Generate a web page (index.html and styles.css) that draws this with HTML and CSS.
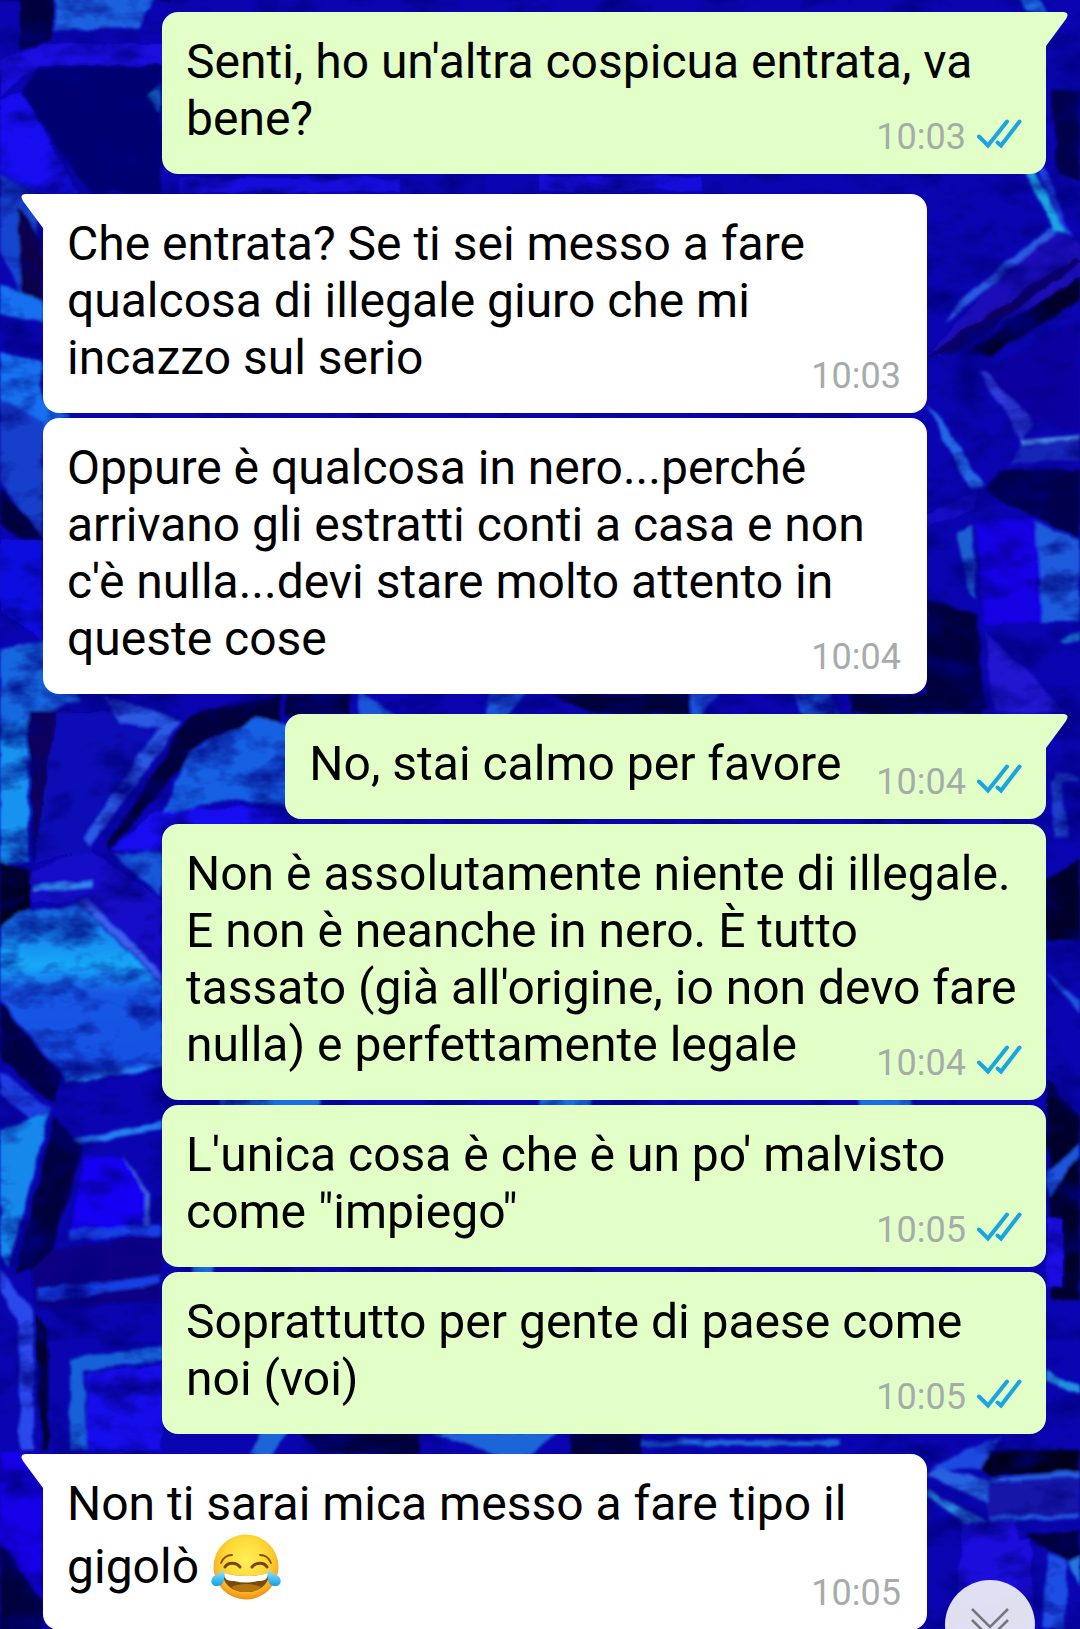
FILE: index.html
```html
<!DOCTYPE html>
<html lang="it">
<head>
    <meta charset="UTF-8">
    <meta name="viewport" content="width=device-width, initial-scale=1.0">
    <title>Chat</title>
    <link rel="stylesheet" href="styles.css">
</head>
<body>
    <!-- Wallpaper: blue crystals -->
    <svg class="wallpaper" viewBox="0 0 1080 1629" preserveAspectRatio="xMidYMid slice" aria-hidden="true">
        <defs>
            <filter id="rough" x="0" y="0" width="100%" height="100%">
                <feTurbulence type="fractalNoise" baseFrequency="0.04" numOctaves="2" seed="4" result="noise"/>
                <feDisplacementMap in="SourceGraphic" in2="noise" scale="8" xChannelSelector="R" yChannelSelector="G"/>
                <feGaussianBlur stdDeviation="1.5"/>
            </filter>
            <filter id="grain" x="0" y="0" width="100%" height="100%">
                <feTurbulence type="fractalNoise" baseFrequency="0.02 0.035" numOctaves="4" seed="9"/>
                <feColorMatrix values="0 0 0 0 0  0 0 0 0 0  0 0 0 0 0.2  2.2 0 0 0 -1"/>
            </filter>
            <linearGradient id="ice" x1="0" y1="0" x2="0" y2="1">
                <stop offset="0" stop-color="#1268e4"/>
                <stop offset="0.35" stop-color="#12a8f8"/>
                <stop offset="0.5" stop-color="#1258e4"/>
                <stop offset="1" stop-color="#1650e4"/>
            </linearGradient>
        </defs>
        <rect width="1080" height="1629" fill="#0a05b0"/>
        <g filter="url(#rough)">
            <!-- left edge, top -->
            <path fill="#04023c" d="M20 0H52V40L20 50ZM0 0H170V-20H0Z"/>
            <path fill="#1a62e0" d="M54 -10H160L138 28L54 30Z"/>
            <path fill="#1a0fe0" d="M0 62L40 44H170V66L38 64L0 96Z"/>
            <path fill="#060370" d="M38 66H162V194H90L22 96Z"/>
            <path fill="#1488d8" d="M148 95L162 86V112Z"/>
            <path fill="#1410f0" d="M0 100L22 92L78 194H44L0 172Z"/>
            <path fill="#1745d0" d="M0 174L34 190L43 300L30 310L0 250Z"/>
            <path fill="#07044c" d="M16 206L43 240V320L22 290Z"/>
            <path fill="#1470f0" d="M0 284L43 300V324L0 314ZM0 352L43 360V400L70 416L30 436L0 400Z"/>
            <path fill="#1740cc" d="M0 400L43 420V540L0 480Z"/>
            <path fill="#05023e" d="M0 486L43 536V554L0 524Z"/>
            <path fill="#1009e0" d="M0 540H43V640L0 610Z"/>
            <path fill="#1868e0" d="M0 650L43 640L80 700L34 716L0 730Z"/>
            <path fill="#1593f0" d="M0 728L28 718V862H0Z"/>
            <path fill="#07035c" d="M28 710H76L34 862Z"/>
            <path fill="#0c0cb8" d="M56 712H175L92 850L34 862Z"/>
            <path fill="#2a5ae4" d="M104 694L182 722L90 846L84 838L160 728L120 722Z"/>
            <path fill="#04013a" d="M190 716L280 694V722L200 744L110 852L106 846Z"/>
            <path fill="#1860e4" d="M190 752L256 718L290 724V806L220 800L160 820Z"/>
            <path fill="#1508f0" d="M155 812L290 806V826H162V850H110Z"/>
            <path fill="#1259da" d="M114 854L162 852V895Z"/>
            <path fill="#02011c" d="M0 860L34 872L30 906L0 940Z"/>
            <path fill="#1410c8" d="M30 872L90 850L162 900V985L80 902H32Z"/>
            <path fill="#3088f0" d="M34 886L94 880V886L34 892Z"/>
            <path fill="url(#ice)" d="M18 910L80 905L162 985V1068L66 1078L0 1000V930Z"/>
            <path fill="#3a60ec" d="M86 898L162 974V982L78 902Z"/>
            <path fill="#050346" d="M0 1002L62 1076L54 1104L0 1060Z"/>
            <path fill="#1e3de0" d="M0 1072L52 1110L30 1118L0 1094Z"/>
            <path fill="#2380f0" d="M64 1076L162 1064V1068L66 1084ZM70 1138L162 1122V1130L74 1144Z"/>
            <path fill="#1488ec" d="M0 1130L50 1112L8 1266L0 1250Z"/>
            <path fill="#06023c" d="M54 1116L82 1146L50 1262L16 1274Z"/>
            <path fill="#1205f4" d="M84 1158L126 1158L146 1196V1228L70 1236Z"/>
            <path fill="#3e60d8" d="M124 1154L150 1196V1226H144V1194Z"/>
            <path fill="#080484" d="M52 1250L162 1234V1300L38 1310L30 1270Z"/>
            <path fill="#1940e4" d="M38 1288L162 1276V1284L38 1302ZM70 1230L162 1224V1234L70 1240Z"/>
            <path fill="#2a48ec" d="M0 1268L34 1312V1450H20L18 1320L0 1290Z"/>
            <path fill="#05022e" d="M36 1314L48 1330V1450H42Z"/>
            <path fill="#1560d8" d="M70 1358L162 1346V1360L84 1370L88 1450H70Z"/>
            <path fill="#170eec" d="M88 1374L162 1364V1450H88Z"/>
            <path fill="#1605e8" d="M0 1452L22 1454L43 1490V1600L0 1540Z"/>
            <path fill="#05023c" d="M0 1544L43 1600V1640H0Z"/>
            <!-- strips between messages -->
            <path fill="#1a55d8" d="M360 690L400 720H360ZM490 690H530L505 716H488ZM790 690H830L840 718H805ZM690 690H720L700 716H692Z"/>
            <path fill="#05023a" d="M285 694H350V714H285ZM550 694H690V714H590ZM850 694H980V714H850Z"/>
            <path fill="#1d70dc" d="M220 1098H320V1107H220ZM540 1098H590V1107H540ZM860 1098H910V1107H860ZM190 1264H214V1274H190Z"/>
            <path fill="#1e65d8" d="M260 1432H290L270 1456H250ZM430 1432H560L530 1456H500ZM640 1440H840V1446H640Z"/>
            <path fill="#04023a" d="M300 1432H420V1454H320ZM570 1432H640V1456H570Z"/>
            <path fill="#1408dc" d="M180 178H400V192H180ZM540 176H700V190H540Z"/>
            <!-- right edge -->
            <path fill="#1d70e8" d="M1018 -6H1036L1048 14H1026Z"/>
            <path fill="#1ca4e4" d="M1024 170L1036 172L1066 232L1054 230Z"/>
            <path fill="#1d3fe0" d="M1038 168H1046L1072 238L1066 234Z"/>
            <path fill="#06034c" d="M1050 90H1080V180L1058 176Z"/>
            <path fill="#1a0fb8" d="M1050 228L1080 246V280L944 356H926Z"/>
            <path fill="#2a5ae0" d="M1050 228L1056 232L944 324L960 298Z"/>
            <path fill="#080260" d="M926 356L1076 256L1080 262L960 352Z"/>
            <path fill="#05022c" d="M966 352L1080 276V300L990 356Z"/>
            <path fill="#3340e0" d="M978 372H988L1034 424L1022 440Z"/>
            <path fill="#0a05a0" d="M984 372L1080 320V430L1034 420Z"/>
            <path fill="#4a8ae0" d="M1020 440L1080 435V439L1022 445Z"/>
            <path fill="#1828b8" d="M1020 446L1080 440V460L1010 464Z"/>
            <path fill="#2468e4" d="M926 404L950 430L984 488H970Z"/>
            <path fill="#06024c" d="M984 492L1000 470H1080V538L1020 510Z"/>
            <path fill="#1208c8" d="M926 514L976 490V510L926 528Z"/>
            <path fill="#1c60d0" d="M955 534L972 524L976 600L966 584Z"/>
            <path fill="#1206e4" d="M976 520L1036 518L1042 622L984 624Z"/>
            <path fill="#1e5cdc" d="M1036 522L1080 540V622L1042 622Z"/>
            <path fill="#04023c" d="M926 600L976 612L986 710H926Z"/>
            <path fill="#1c84dc" d="M1060 642L1080 630V638L1066 646Z"/>
            <path fill="#2412d0" d="M986 632L1040 684L1064 712H994Z"/>
            <path fill="#1a40c8" d="M1052 780L1062 776L1068 836L1054 840ZM1054 772L1080 776V780L1056 784Z"/>
            <path fill="#05022c" d="M1046 880L1080 860V940H1046ZM1046 1080L1080 1120V1300H1052Z"/>
            <path fill="#1d55dc" d="M1046 972L1080 1000V1014L1060 990ZM1046 1172L1080 1144V1152L1050 1196Z"/>
            <path fill="#1a0ee4" d="M1048 1220H1062V1286H1046Z"/>
            <path fill="#2090e0" d="M1046 1370L1080 1388V1396L1046 1380Z"/>
            <path fill="#1c48e0" d="M1004 1438L980 1468L930 1470L966 1450Z"/>
            <path fill="#03011c" d="M990 1450H1080V1472L990 1476L980 1466Z"/>
            <path fill="#2862e0" d="M940 1468L990 1480V1504L926 1476ZM990 1478L1080 1472V1477L990 1482Z"/>
            <path fill="#298be0" d="M926 1490L976 1516L984 1522H964L926 1496Z"/>
            <path fill="#1418a8" d="M992 1484L1080 1478V1516L988 1520Z"/>
            <path fill="#235ae0" d="M988 1518L1080 1514V1518L988 1522Z"/>
            <path fill="#1a10dc" d="M962 1522H1016L1036 1629H956ZM1018 1540H1030L1034 1629H1020Z"/>
            <path fill="#1a4ee4" d="M1048 1554L1066 1560V1629H1042Z"/>
            <path fill="#05033c" d="M1024 1536L1080 1530V1556L1066 1560Z"/>
            <path fill="#2478d8" d="M1068 1562L1080 1554V1588Z"/>
        </g>
        <rect width="1080" height="1629" filter="url(#grain)"/>
    </svg>

    <svg class="sprite" aria-hidden="true">
        <symbol id="ticks" viewBox="0 0 46 38">
            <path fill="none" stroke="#1ba5e0" stroke-width="4" stroke-linecap="round" stroke-linejoin="miter" d="M3 18.500L12 27.500L31 3.500M21.500 24.500L25 27.500L43.500 3.500"/>
        </symbol>
    </svg>

    <main class="chat">
        <div class="message out tail">
            <p>Senti, ho un'altra cospicua entrata, va bene?
                <span class="meta"><time>10:03</time><svg class="ticks" role="img" aria-label="Letto"><use href="#ticks"/></svg></span>
            </p>
        </div>

        <div class="message in tail">
            <p>Che entrata? Se ti sei messo a fare qualcosa di illegale giuro che mi incazzo sul serio
                <span class="meta"><time>10:03</time></span>
            </p>
        </div>
        <div class="message in">
            <p>Oppure è qualcosa in nero...perché arrivano gli estratti conti a casa e non c'è nulla...devi stare molto attento in queste cose
                <span class="meta"><time>10:04</time></span>
            </p>
        </div>

        <div class="message out tail">
            <p>No, stai calmo per favore
                <span class="meta"><time>10:04</time><svg class="ticks" role="img" aria-label="Letto"><use href="#ticks"/></svg></span>
            </p>
        </div>
        <div class="message out">
            <p>Non è assolutamente niente di illegale. E non è neanche in nero. È tutto tassato (già all'origine, io non devo fare nulla) e perfettamente legale
                <span class="meta"><time>10:04</time><svg class="ticks" role="img" aria-label="Letto"><use href="#ticks"/></svg></span>
            </p>
        </div>
        <div class="message out">
            <p>L'unica cosa è che è un po' malvisto come "impiego"
                <span class="meta"><time>10:05</time><svg class="ticks" role="img" aria-label="Letto"><use href="#ticks"/></svg></span>
            </p>
        </div>
        <div class="message out">
            <p>Soprattutto per gente di paese come noi (voi)
                <span class="meta"><time>10:05</time><svg class="ticks" role="img" aria-label="Letto"><use href="#ticks"/></svg></span>
            </p>
        </div>

        <div class="message in tail">
            <p>Non ti sarai mica messo a fare tipo il gigolò
                <svg class="emoji" viewBox="0 0 70 70" role="img" aria-label="Faccina che ride fino alle lacrime">
                    <defs>
                        <radialGradient id="face" cx="0.5" cy="0.38" r="0.62">
                            <stop offset="0" stop-color="#fff05a"/>
                            <stop offset="0.55" stop-color="#fdd835"/>
                            <stop offset="0.85" stop-color="#f9b021"/>
                            <stop offset="1" stop-color="#ee8c16"/>
                        </radialGradient>
                        <linearGradient id="tear" x1="0" y1="0" x2="0" y2="1">
                            <stop offset="0" stop-color="#9be4fa"/>
                            <stop offset="1" stop-color="#0c9fe8"/>
                        </linearGradient>
                    </defs>
                    <circle cx="35" cy="35" r="32.500" fill="url(#face)"/>
                    <path fill="none" stroke="#8a4b0c" stroke-width="1.800" stroke-linecap="round" d="M10 31C12 26 16 23 21 23M60 31C58 26 54 23 49 23"/>
                    <path fill="none" stroke="#7a4308" stroke-width="3" stroke-linecap="round" d="M14 35C17 30 25 30 29 35M41 35C45 30 53 30 56 35"/>
                    <path fill="#7a4a08" d="M12 41C26 45 44 45 58 41C58 53 48 60 35 60S12 53 12 41Z"/>
                    <path fill="#fff" d="M13 41C26 45 44 45 57 41C57 48 53 49 47 49C39 51 31 51 23 49C17 49 13 48 13 41Z"/>
                    <path fill="#b07410" d="M20 55C28 51 42 51 50 55C46 59 41 60 35 60S24 59 20 55Z"/>
                    <path fill="url(#tear)" d="M13 38C14 47 13 54 6 54C-1 54 -1 47 3 44ZM57 38C56 47 57 54 64 54C71 54 71 47 67 44Z"/>
                </svg>
                <span class="meta"><time>10:05</time></span>
            </p>
        </div>
    </main>

    <button class="scroll-down" type="button" aria-label="Vai in fondo">
        <svg viewBox="0 0 40 36" aria-hidden="true">
            <path fill="none" stroke="#777" stroke-width="2.500" d="M2 2L20 20L38 2M2 13L20 31L38 13"/>
        </svg>
    </button>
</body>
</html>
```
FILE: styles.css
```css
* {
    box-sizing: border-box;
}
body {
    margin: 0;
    background: #0a05b0;
    color: #000;
    font-family: Roboto, "Liberation Sans", sans-serif;
}
.wallpaper {
    position: fixed;
    top: 0;
    left: 0;
    width: 100%;
    height: 100%;
    z-index: -1;
}
.sprite {
    display: none;
}
.chat {
    display: flex;
    flex-direction: column;
    gap: 5px;
    padding: 12px 34px 0 43px;
}
.message {
    position: relative;
    max-width: 884px;
    padding: 21px 24px 27px;
    border-radius: 16px;
    font-size: 48px;
    line-height: 57px;
}
.message p {
    margin: 0;
}
.message.out {
    align-self: flex-end;
    background: #e1ffc7;
}
.message.in {
    align-self: flex-start;
    background: #fff;
}
.message.in:not(:last-child) {
    width: 884px;
}
.tail:not(:first-child) {
    margin-top: 15px;
}
.tail::before {
    content: "";
    position: absolute;
    top: 0;
    width: 22px;
    height: 34px;
    background: inherit;
    clip-path: path("M0 0H18Q24 1 20 7L0 34Z");
}
.out.tail {
    border-top-right-radius: 0;
}
.out.tail::before {
    left: 100%;
}
.in.tail {
    border-top-left-radius: 0;
}
.in.tail::before {
    right: 100%;
    clip-path: path("M22 0H4Q-2 1 2 7L22 34Z");
}
/* time sits beside the last line, a bit lower than the text */
.meta {
    float: right;
    display: flex;
    align-items: center;
    gap: 10px;
    height: 36px;
    margin: 29px 0 -8px 35px;
    color: #a5acaa;
    font-size: 36px;
    line-height: 36px;
}
.in .meta {
    margin-right: 2px;
}
.emoji + .meta {
    margin-top: 43px;
}
.ticks {
    width: 46px;
    height: 38px;
}
.emoji {
    width: 70px;
    height: 70px;
    vertical-align: -19px;
}
.scroll-down {
    position: fixed;
    right: 45px;
    bottom: -41px;
    display: flex;
    align-items: center;
    justify-content: center;
    width: 90px;
    height: 90px;
    padding: 0;
    border: 0;
    border-radius: 50%;
    background: rgba(240, 240, 245, 0.93);
    cursor: pointer;
}
.scroll-down svg {
    width: 40px;
    height: 36px;
}
```
